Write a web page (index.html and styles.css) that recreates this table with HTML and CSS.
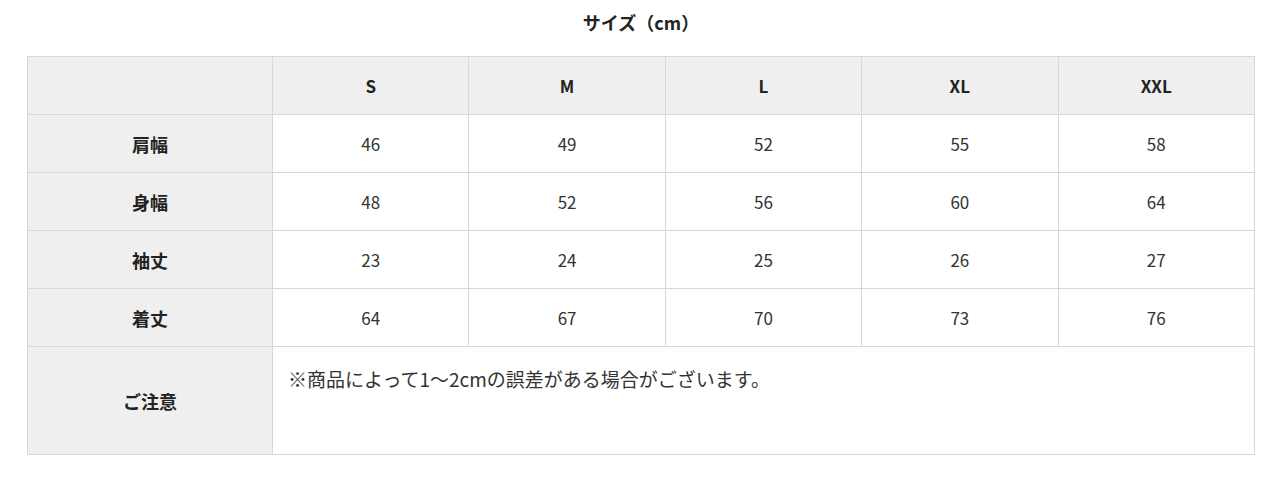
FILE: index.html
```html
<!DOCTYPE html>
<html lang="ja">
<head>
<meta charset="utf-8">
<link rel="stylesheet" href="styles.css">
</head>
<body>
<div class="wrap">
  <h2 class="title">サイズ（cm）</h2>
  <table class="size">
    <colgroup>
      <col class="c-label">
      <col><col><col><col><col>
    </colgroup>
    <tr class="head">
      <th></th><th>S</th><th>M</th><th>L</th><th>XL</th><th>XXL</th>
    </tr>
    <tr><th>肩幅</th><td>46</td><td>49</td><td>52</td><td>55</td><td>58</td></tr>
    <tr><th>身幅</th><td>48</td><td>52</td><td>56</td><td>60</td><td>64</td></tr>
    <tr><th>袖丈</th><td>23</td><td>24</td><td>25</td><td>26</td><td>27</td></tr>
    <tr><th>着丈</th><td>64</td><td>67</td><td>70</td><td>73</td><td>76</td></tr>
    <tr class="note"><th>ご注意</th><td colspan="5">※商品によって1〜2cmの誤差がある場合がございます。</td></tr>
  </table>
</div>
</body>
</html>
```

FILE: styles.css
```css
html, body {
  margin: 0;
  padding: 0;
  background: #fff;
}
body {
  font-family: "Noto Sans CJK JP", "Noto Sans", sans-serif;
  color: #333;
}
.wrap {
  padding: 0 25px 0 27px;
}
.title {
  margin: 0;
  height: 44px;
  line-height: 44px;
  font-size: 18px;
  font-weight: 700;
  text-align: center;
  color: #222;
}
.size {
  width: 1228px;
  border-collapse: collapse;
  table-layout: fixed;
  margin-top: 12px;
  font-size: 17px;
}
.c-label {
  width: 245px;
}
.size th, .size td {
  border: 1.5px solid #d8d8d8;
  height: 57px;
  padding: 0;
  text-align: center;
  vertical-align: middle;
}
.size th {
  background: #efefef;
  font-weight: 700;
  color: #222;
}
.size tr:not(.head) th {
  font-size: 18px;
}
.size td {
  background: #fff;
}
.size .note th, .size .note td {
  height: 107px;
}
.size .note td {
  height: 88px;
  text-align: left;
  vertical-align: top;
  font-size: 19px;
  padding: 18px 15px 0;
}
```
